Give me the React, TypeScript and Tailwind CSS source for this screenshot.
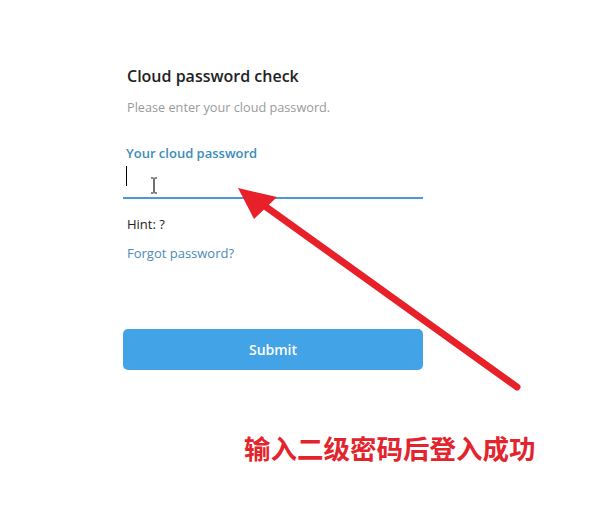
import React from 'react';

function Arrow() {
  return (
    <svg className="absolute left-0 top-0 pointer-events-none" width="599" height="507" viewBox="0 0 599 507">
      <line x1="517" y1="387" x2="262" y2="204" stroke="#e8202a" strokeWidth="7" strokeLinecap="round" />
      <polygon points="238,188 277,197 254,219" fill="#e8202a" />
    </svg>
  );
}

function IBeam() {
  return (
    <svg className="absolute left-[27px] top-[14px]" width="8" height="17" viewBox="0 0 8 17">
      <path d="M1 1h2.5M4.5 1H7M4 1.5v14M1 16h2.5M4.5 16H7" stroke="#111" strokeWidth="1.2" fill="none" />
    </svg>
  );
}

export default function App() {
  return (
    <div className="relative w-[599px] h-[507px] bg-white overflow-hidden" style={{ fontFamily: '"Open Sans", "Noto Sans", sans-serif' }}>
      <div className="pl-[123px] pt-[64px] w-[423px] flex flex-col">
        <h1 className="pl-1 text-[16px] leading-6 font-semibold text-[#222]">Cloud password check</h1>
        <p className="pl-1 mt-[9px] text-[12.7px] leading-5 text-[#9a9a9a]">Please enter your cloud password.</p>

        <label className="pl-[3px] mt-[26px] text-[13px] leading-5 font-semibold text-[#3b8dbd]">Your cloud password</label>
        <div className="relative h-[36px] border-b-2 border-[#4a9bd4]">
          <span className="absolute left-[3px] top-[3px] w-[1px] h-[20px] bg-black" />
          <IBeam />
        </div>

        <p className="pl-1 mt-[15px] text-[13px] leading-5 text-[#222]">Hint: ?</p>
        <a className="pl-1 mt-[9px] text-[13px] leading-5 text-[#4a8bb8]">Forgot password?</a>

        <button className="mt-[66px] h-[41px] rounded-[5px] bg-[#42a3e6] text-white text-[14px] font-semibold">Submit</button>
      </div>

      <p className="absolute left-[244px] top-[430px] text-[26.5px] leading-9 font-bold text-[#e4242d]" style={{ fontFamily: '"Noto Sans CJK SC", sans-serif' }}>
        输入二级密码后登入成功
      </p>

      <Arrow />
    </div>
  );
}
